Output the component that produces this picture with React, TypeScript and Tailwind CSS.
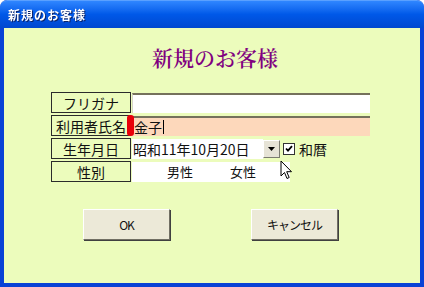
import React from "react";

const jp = { fontFamily: '"Noto Sans CJK JP", "Noto Sans", sans-serif' };
const serif = { fontFamily: '"Noto Serif CJK JP", "Noto Sans CJK JP", serif' };

function LabelBox({ text }: { text: string }) {
  return (
    <div
      className="w-[80px] h-[21px] border border-[#2b2b2b] flex items-center justify-center text-[14px] leading-none text-[#111] shrink-0 bg-[#ecfcbc]"
      style={jp}
    >
      {text}
    </div>
  );
}

export default function App() {
  return (
    <div className="w-[424px] h-[287px] bg-[#0842d6] rounded-t-[7px] flex flex-col overflow-hidden">
      <div className="h-[28px] shrink-0 bg-gradient-to-b from-[#2f86ff] via-[#0058e8] to-[#0048d0] flex items-center pl-[8px] rounded-t-[7px] border-t border-[#5aa0ff]">
        <span className="text-white font-bold text-[12px] leading-none tracking-[1px] drop-shadow-[1px_1px_0_#0a246a]" style={jp}>
          新規のお客様
        </span>
      </div>
      <div className="flex-1 ml-[4px] mr-[4px] mb-[4px] bg-[#ecfcbc] relative flex flex-col">
        <div className="pt-[17px] text-center text-[21px] leading-[24px] text-[#800080] pl-[6px] font-semibold" style={serif}>
          新規のお客様
        </div>
        <div className="mt-[23px] ml-[47px] flex flex-col gap-[2px]">
          <div className="flex items-center h-[21px]">
            <LabelBox text="フリガナ" />
            <div className="w-[238px] h-[20px] ml-[1px] bg-white border-t-2 border-t-[#75715c] border-l border-l-[#d8d8c8]" />
          </div>
          <div className="flex items-center h-[21px] relative">
            <LabelBox text="利用者氏名" />
            <div className="w-[238px] h-[20px] ml-[1px] bg-[#fdd8bb] border-t-2 border-t-[#75715c] flex items-center pl-[2px] text-[14px] text-[#111] leading-none" style={jp}>
              金子<span className="ml-[1px] w-[1px] h-[14px] bg-black" />
            </div>
            <div className="absolute left-[76px] top-[0px] w-[7px] h-[21px] bg-[#e8000a] rounded-[3px]" />
          </div>
          <div className="flex items-center h-[21px]">
            <LabelBox text="生年月日" />
            <div className="w-[131px] h-[20px] ml-[1px] bg-white flex items-center pl-[1px] text-[14px] leading-none text-[#111]" style={jp}>
              昭和11年10月20日
            </div>
            <div className="w-[17px] h-[18px] bg-[#e6e3d6] border border-t-white border-l-white border-r-[#7b7b70] border-b-[#7b7b70] flex items-center justify-center">
              <svg width="7" height="4" viewBox="0 0 7 4"><path d="M0 0h7L3.5 4z" fill="#000" /></svg>
            </div>
            <div className="ml-[3px] w-[12px] h-[12px] bg-white border border-[#333] flex items-center justify-center">
              <svg width="8" height="8" viewBox="0 0 8 8"><path d="M1 3.5l2 2.2L7 1.2" stroke="#000" strokeWidth="1.8" fill="none" /></svg>
            </div>
            <span className="ml-[4px] text-[14px] leading-none text-[#111]" style={jp}>和暦</span>
          </div>
          <div className="flex items-center h-[21px]">
            <LabelBox text="性別" />
            <div className="w-[158px] h-[20px] ml-[1px] bg-white flex items-center text-[13px] leading-none text-[#111]" style={jp}>
              <span className="ml-[35px]">男性</span>
              <span className="ml-[37px]">女性</span>
            </div>
          </div>
        </div>
        <div className="mt-[27px] flex">
          <button className="ml-[79px] w-[87px] h-[31px] bg-[#ece9d8] border border-t-white border-l-white border-r-[#716f64] border-b-[#716f64] shadow-[1px_1px_0_#404040] text-[12px] text-[#111] tracking-[-1px]" style={jp}>
            OK
          </button>
          <button className="ml-[81px] w-[87px] h-[31px] bg-[#ece9d8] border border-t-white border-l-white border-r-[#716f64] border-b-[#716f64] shadow-[1px_1px_0_#404040] text-[12px] text-[#111] tracking-[-1px]" style={jp}>
            キャンセル
          </button>
        </div>
        <svg className="absolute left-[276px] top-[132px]" width="13" height="21" viewBox="0 0 13 21">
          <path d="M1 1v15l3.5-3.5 2.5 6 2.2-1-2.5-5.8H11.5z" fill="#fff" stroke="#000" strokeWidth="1" strokeLinejoin="round" />
        </svg>
      </div>
    </div>
  );
}
